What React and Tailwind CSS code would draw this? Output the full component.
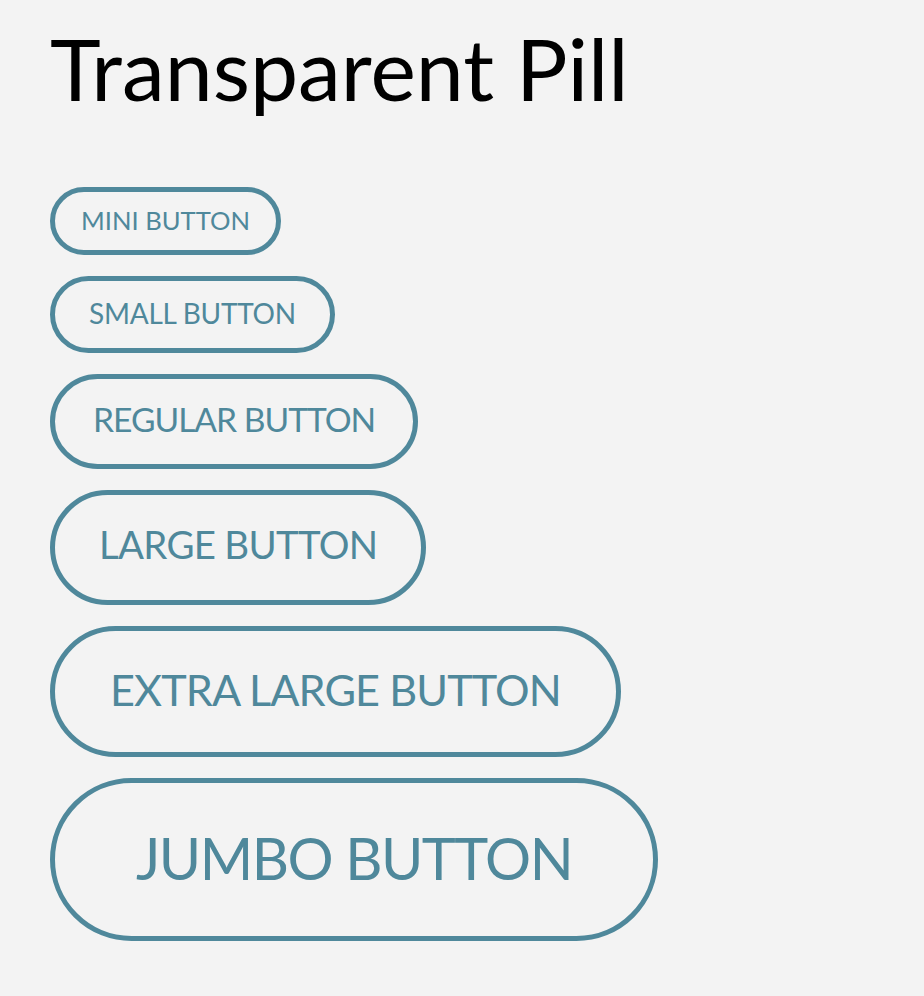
import React from 'react';

// Outline pill buttons in six sizes
const SIZES = [
    { label: 'Mini Button', className: 'h-[68px] px-[26px] text-[25.6px]' },
    { label: 'Small Button', className: 'h-[77px] px-[34px] pb-[3px] text-[28px] tracking-[-0.25px]' },
    { label: 'Regular Button', className: 'h-[95px] px-[38px] pb-[3px] text-[33.6px] tracking-[-1px]' },
    { label: 'Large Button', className: 'h-[115px] px-[44px] pb-[6px] text-[38.4px] tracking-[-0.7px]' },
    { label: 'Extra Large Button', className: 'h-[131px] px-[55px] pb-[3px] text-[43.2px] tracking-[-0.9px]' },
    { label: 'Jumbo Button', className: 'h-[163px] px-[81px] pb-[3px] text-[57.6px] tracking-[-1.5px]' },
];

const PillButton = ({ label, className }) => (
    <button
        type="button"
        className={`inline-flex items-center justify-center rounded-full border-[5px] border-[#4f889b] bg-transparent uppercase leading-none text-[#4f889b] ${className}`}
    >
        {label}
    </button>
);

const App = () => {
    return (
        <div className="min-h-[996px] bg-[#f3f3f3] pl-[50px] pt-[25px] font-['Lato',sans-serif]">
            <h1 className="text-[86px] font-normal leading-none text-black">Transparent Pill</h1>

            <div className="mt-[76px] flex flex-col items-start gap-[21px]">
                {SIZES.map(size => (
                    <PillButton key={size.label} {...size} />
                ))}
            </div>
        </div>
    );
};

export default App;
